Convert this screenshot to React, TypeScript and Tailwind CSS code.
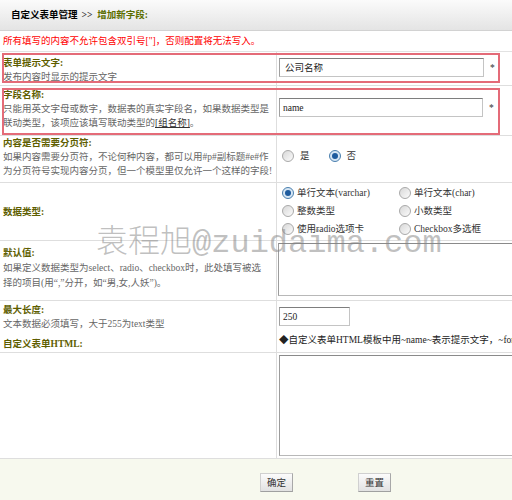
import React from "react";

function Radio({ checked }: { checked?: boolean }) {
  return (
    <span
      className={
        checked
          ? "inline-flex shrink-0 items-center justify-center w-[12px] h-[12px] rounded-full border border-[#4a7fae] bg-[#d6e6f4]"
          : "inline-flex shrink-0 items-center justify-center w-[12px] h-[12px] rounded-full border border-[#a9a9a9] bg-gradient-to-br from-[#d8d8d8] to-[#fbfbfb]"
      }
    >
      {checked && <span className="w-[6px] h-[6px] rounded-full bg-[#1d5b9e]" />}
    </span>
  );
}

const label = "font-bold text-[#5e5e00]";
const desc = "text-[#666]";
const inputCls =
  "h-[19px] border border-[#c4c4c4] border-t-[#7e7e7e] border-l-[#a0a0a0] bg-white flex items-center text-[#222]";

export default function App() {
  return (
    <div className="relative w-[512px] h-[500px] overflow-hidden bg-white text-[9.5px] leading-[14px] text-[#333] font-['Liberation_Serif','Noto_Sans_CJK_SC',sans-serif]">
      {/* header */}
      <div className="h-[31px] flex items-center pl-[11px] bg-gradient-to-b from-[#fbfbfb] to-[#e4e4e4] border-b border-[#d2d2d2] font-bold">
        <span className="text-black">自定义表单管理</span>
        <span className="ml-[4px] text-[#333]">&gt;&gt;</span>
        <span className="ml-[5px] text-[#5b6e00]">增加新字段:</span>
      </div>
      {/* notice */}
      <div className="h-[21px] flex items-center pl-[3px] text-[#f00] border-b border-[#e2e2e2] whitespace-nowrap">
        所有填写的内容不允许包含双引号["]，否则配置将无法写入。
      </div>

      {/* row 1 */}
      <div className="flex h-[34px] border-b border-[#dedede]">
        <div className="w-[277px] shrink-0 border-r border-[#dedede] pl-[3px] pt-[4px] whitespace-nowrap">
          <div className={label}>表单提示文字:</div>
          <div className={desc}>发布内容时显示的提示文字</div>
        </div>
        <div className="flex items-start pl-[2px] pt-[6px]">
          <div className={`${inputCls} w-[205px] pl-[5px]`}>公司名称</div>
          <span className="ml-[6px] mt-[3px] text-[#333]">*</span>
        </div>
      </div>

      {/* row 2 */}
      <div className="flex h-[50px] border-b border-[#dedede]">
        <div className="w-[277px] shrink-0 border-r border-[#dedede] pl-[3px] pt-[2px] whitespace-nowrap">
          <div className={label}>字段名称:</div>
          <div className={desc}>
            只能用英文字母或数字，数据表的真实字段名，如果数据类型是
            <br />
            联动类型，该项应该填写联动类型的
            <span className="text-[#333] underline">[组名称]</span>。
          </div>
        </div>
        <div className="flex items-start pl-[2px] pt-[12px]">
          <div className={`${inputCls} w-[204px] pl-[3px]`}>name</div>
          <span className="ml-[6px] mt-[3px] text-[#333]">*</span>
        </div>
      </div>

      {/* row 3 */}
      <div className="flex h-[47px] border-b border-[#dedede]">
        <div className="w-[277px] shrink-0 border-r border-[#dedede] pl-[3px] pt-[0px] whitespace-nowrap">
          <div className={label}>内容是否需要分页符:</div>
          <div className={desc}>
            如果内容需要分页符，不论何种内容，都可以用#p#副标题#e#作
            <br />
            为分页符号实现内容分页，但一个模型里仅允许一个这样的字段!
          </div>
        </div>
        <div className="flex items-center h-[12px] mt-[14px] pl-[5px]">
          <Radio />
          <span className="ml-[6px]">是</span>
          <span className="ml-[19px] flex items-center">
            <Radio checked />
          </span>
          <span className="ml-[6px]">否</span>
        </div>
      </div>

      {/* row 4 */}
      <div className="flex h-[58px] border-b border-[#dedede]">
        <div className="w-[277px] shrink-0 border-r border-[#dedede] pl-[3px] flex items-center">
          <div className={label}>数据类型:</div>
        </div>
        <div className="pl-[5px] pt-[1px] grid grid-cols-[117px_117px] auto-rows-[18px] whitespace-nowrap">
          {[
            ["单行文本(varchar)", true],
            ["单行文本(char)", false],
            ["整数类型", false],
            ["小数类型", false],
            ["使用radio选项卡", false],
            ["Checkbox多选框", false],
          ].map(([t, c]) => (
            <div key={t as string} className="flex items-center">
              <Radio checked={c as boolean} />
              <span className="ml-[3px]">{t as string}</span>
            </div>
          ))}
        </div>
      </div>

      {/* row 5 */}
      <div className="flex h-[60px] border-b border-[#dedede]">
        <div className="w-[277px] shrink-0 border-r border-[#dedede] pl-[3px] pt-[5px] whitespace-nowrap">
          <div className={label}>默认值:</div>
          <div className={`${desc} leading-[15px] mt-[1px]`}>
            如果定义数据类型为select、radio、checkbox时，此处填写被选
            <br />
            择的项目(用“,”分开，如“男,女,人妖”)。
          </div>
        </div>
        <div className="pl-[1px] pt-[2px]">
          <div className="w-[260px] h-[53px] border border-[#b8b8b8] border-t-[#8a8a8a] border-l-[#9c9c9c] bg-white" />
        </div>
      </div>

      {/* row 6 */}
      <div className="flex h-[52px] border-b border-[#dedede]">
        <div className="w-[277px] shrink-0 border-r border-[#dedede] pl-[3px] pt-[2px] whitespace-nowrap">
          <div className={label}>最大长度:</div>
          <div className={desc}>文本数据必须填写，大于255为text类型</div>
          <div className={`${label} mt-[6px]`}>自定义表单HTML:</div>
        </div>
        <div className="pl-[2px] pt-[6px] whitespace-nowrap">
          <div className={`${inputCls} w-[71px] pl-[3px]`}>250</div>
          <div className="mt-[7px] text-[#222]">◆自定义表单HTML模板中用~name~表示提示文字，~form~表示表单元素</div>
        </div>
      </div>

      {/* row 7 */}
      <div className="flex h-[106px] border-b border-[#dedede]">
        <div className="w-[277px] shrink-0 border-r border-[#dedede]" />
        <div className="pl-[2px] pt-[2px]">
          <div className="w-[260px] h-[101px] border border-[#b8b8b8] border-t-[#8a8a8a] border-l-[#9c9c9c] bg-white" />
        </div>
      </div>

      {/* footer */}
      <div className="h-[41px] bg-[#f7f9ee] flex items-start pt-[14px] pl-[260px] gap-[65px]">
        {["确定", "重置"].map((t) => (
          <button
            key={t}
            className="w-[33px] h-[19px] flex items-center justify-center text-[#333] bg-gradient-to-b from-[#fbfbfb] to-[#e2e2e2] border border-[#d0d0d0] border-r-[#a8a8a8] border-b-[#a0a0a0]"
          >
            {t}
          </button>
        ))}
      </div>

      {/* red annotation boxes */}
      <div className="absolute left-[2px] top-[53px] w-[498px] h-[30px] border-2 border-[#e46b78] pointer-events-none" />
      <div className="absolute left-[2px] top-[88px] w-[498px] h-[47px] border-2 border-[#e46b78] pointer-events-none" />

      {/* watermark */}
      <div className="absolute left-[96px] top-[218px] whitespace-nowrap pointer-events-none text-[32px] leading-[40px] text-[rgba(130,130,130,0.5)]">
        <span className="font-['Noto_Sans_CJK_SC',serif] font-light">袁程旭</span>
        <span className="font-['Liberation_Mono',monospace]">@zuidaima.com</span>
      </div>
    </div>
  );
}
